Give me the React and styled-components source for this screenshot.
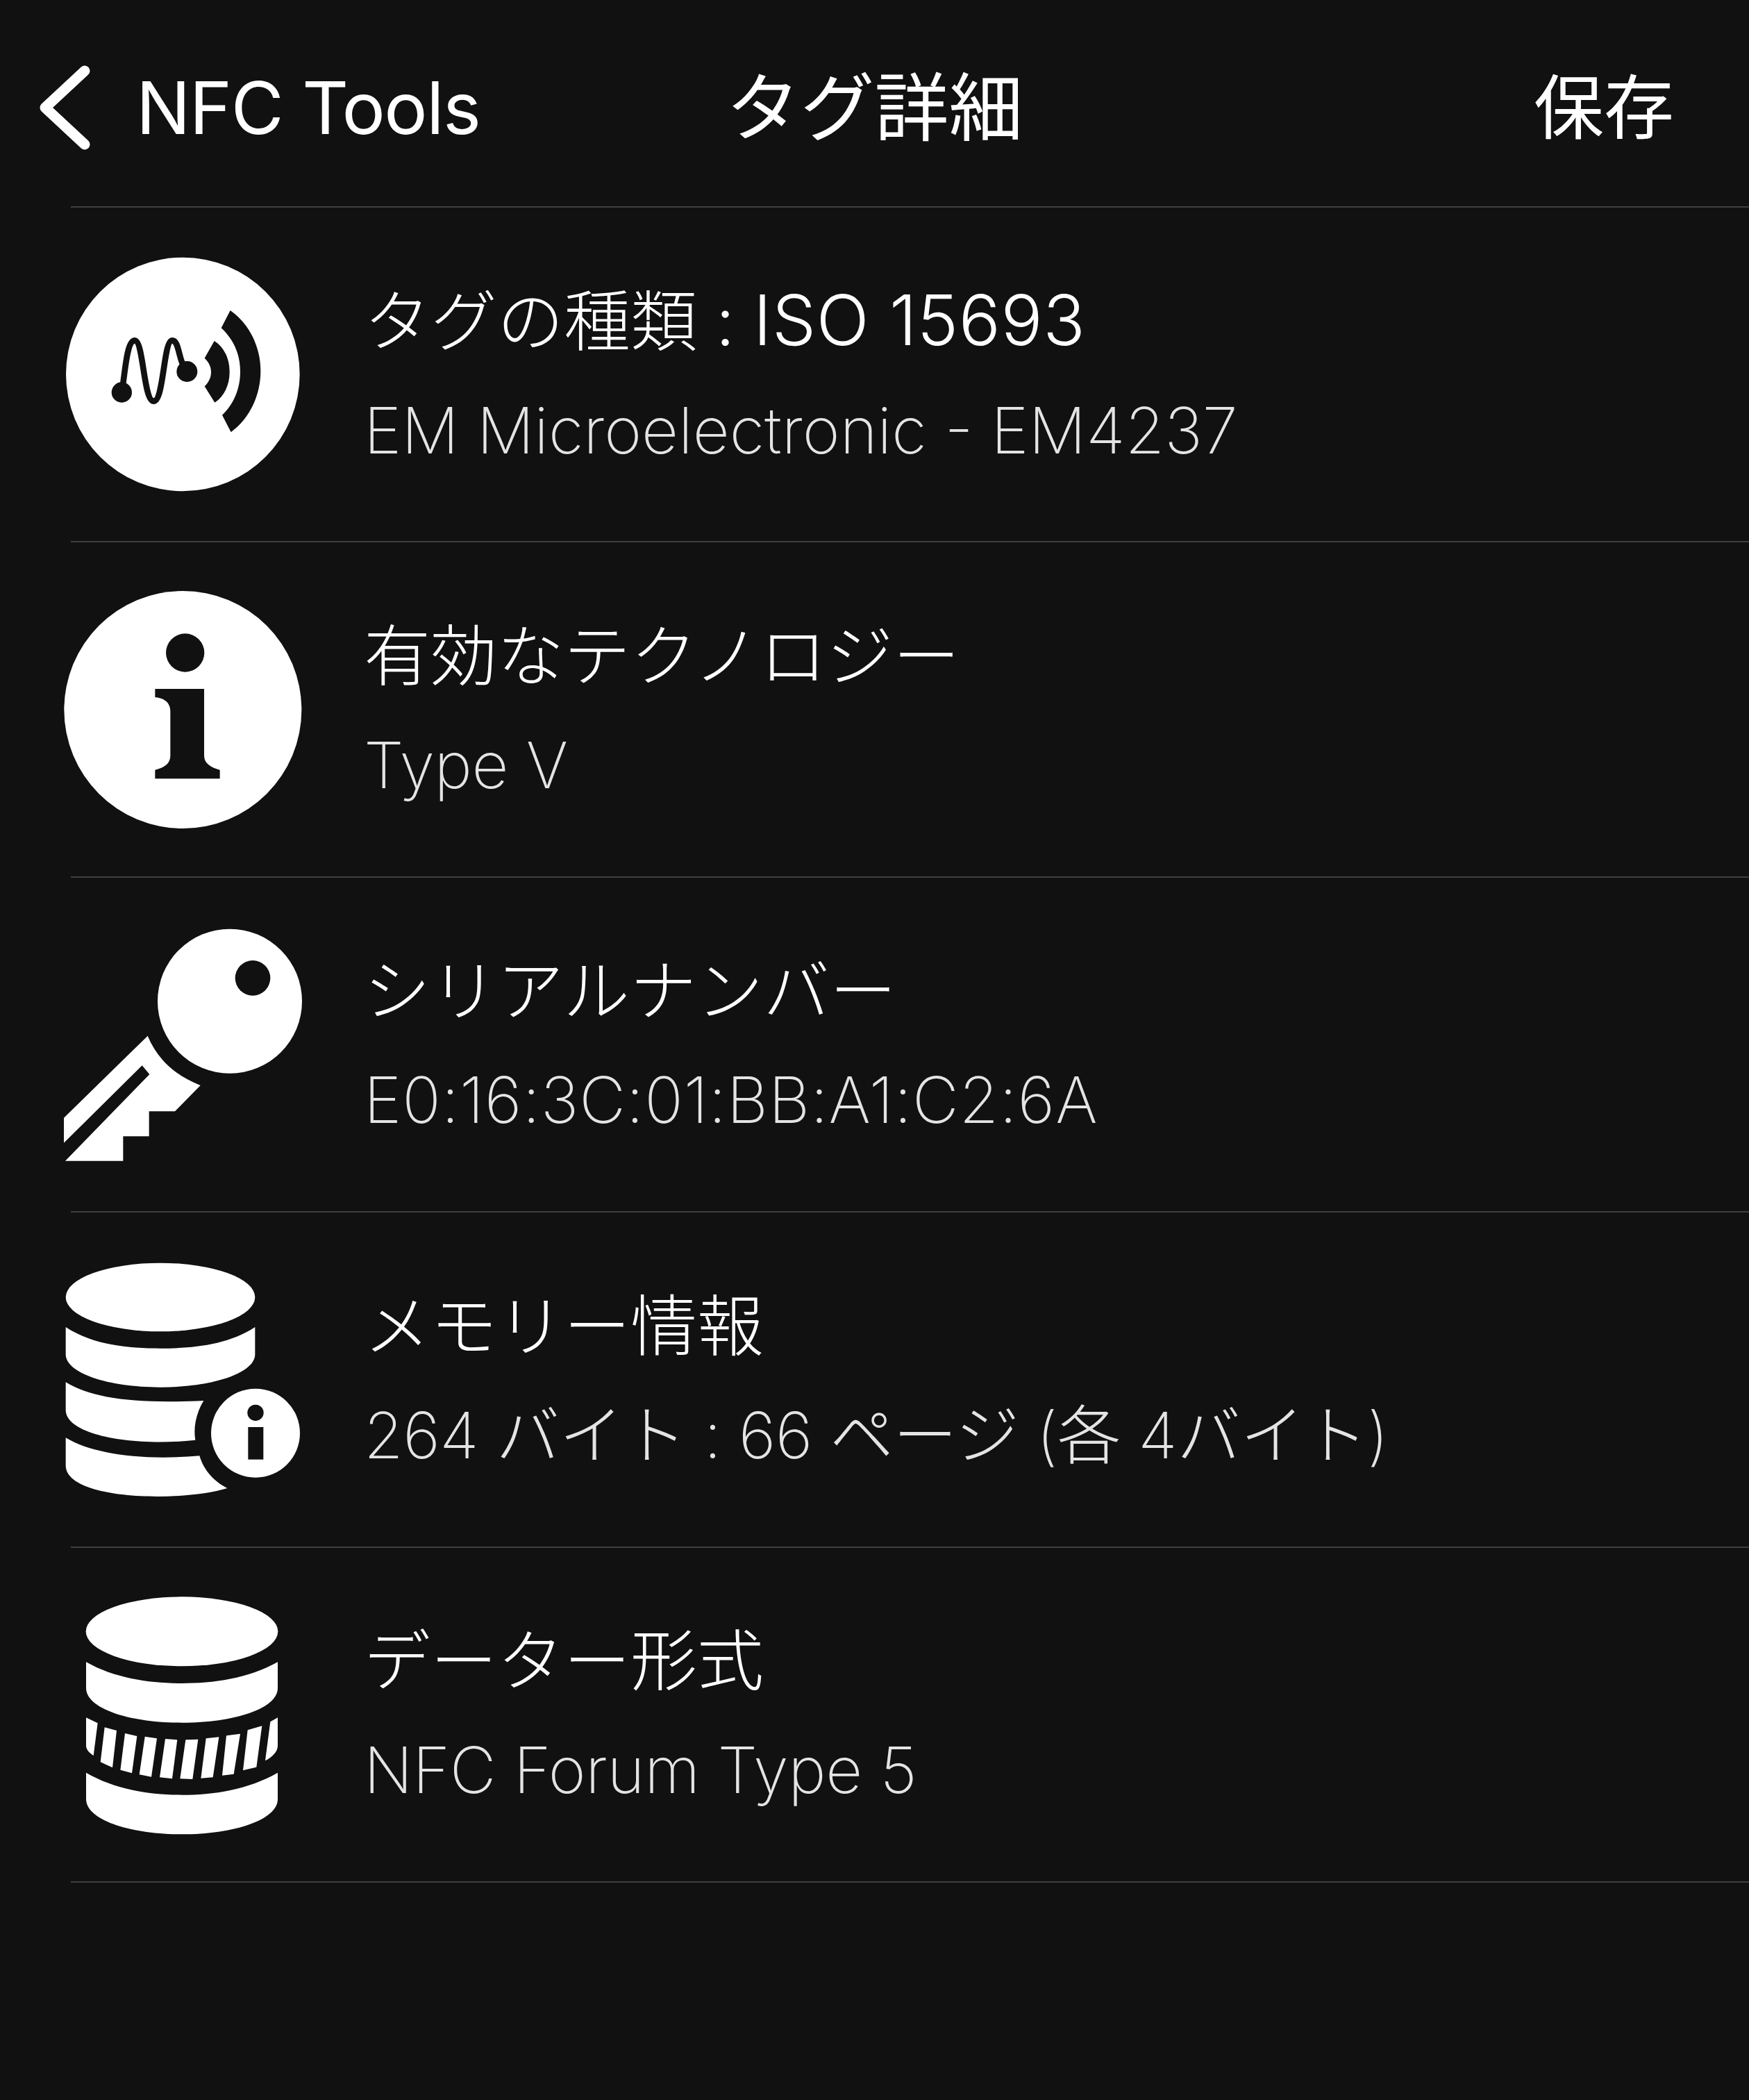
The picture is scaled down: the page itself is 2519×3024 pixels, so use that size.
import React from "react";
import styled, { createGlobalStyle } from "styled-components";

const Global = createGlobalStyle`
  html, body { margin: 0; padding: 0; background: #111112; }
  #root { width: 2519px; min-height: 3024px; }
`;
const LATIN = `Inter, "Noto Sans CJK JP", sans-serif`;
const Page = styled.div`
  width: 2519px; height: 3024px; background: #111112; color: #fff;
  font-family: ${LATIN}; overflow: hidden;
`;
const NavBar = styled.header`
  height: 297px; display: grid; grid-template-columns: 1fr auto 1fr; align-items: center;
  padding: 12px 56px 0; box-sizing: border-box;
`;
const BackLink = styled.div`
  display: flex; align-items: center; gap: 64px; font-size: 104px; font-weight: 400; line-height: 120px; letter-spacing: -1.5px;
`;
const NavTitle = styled.h1`
  margin: 0; font-size: 107px; font-weight: 400; line-height: 120px;
`;
const SaveAction = styled.div`
  justify-self: end; margin-right: 52px; font-size: 101px; font-weight: 400; line-height: 120px;
`;
const Divider = styled.div`
  height: 2px; margin-left: 102px; background: #3f3f40;
`;
const Row = styled.section`
  height: 480.4px; display: flex; align-items: center; gap: 64px; padding-left: 60px;
`;
const IconBox = styled.svg`
  width: 400px; height: 400px; flex: none; display: block;
`;
const TextColumn = styled.div`
  display: flex; flex-direction: column; gap: 30px; padding-top: 3px;
`;
const RowTitle = styled.div`
  font-size: 96px; font-weight: 300; line-height: 128px; white-space: nowrap;
`;
const LatinRun = styled.span`
  font-size: 100px; letter-spacing: 0.6px;
`;
const RowSub = styled.div`
  font-size: 92px; font-weight: 200; line-height: 128px; color: #e4e4e4; white-space: nowrap;
  letter-spacing: ${(p) => p.$tracking || 0}px;
`;

const Vb = ({ cy, children }) => (
  <IconBox viewBox={`0 ${cy - 600} 1200 1200`}>{children}</IconBox>
);
const W = "#fff";
const B = "#111112";

const NfcIcon = () => (
  <Vb cy={596}>
    <circle cx="610" cy="596" r="505" fill={W} />
    <path d="M346 672 C360 600 366 450 402 450 C440 450 440 712 484 712 C528 712 526 450 564 450 C596 450 590 540 626 584" fill="none" stroke={B} strokeWidth="26" strokeLinecap="round" />
    <circle cx="346" cy="674" r="44" fill={B} />
    <circle cx="628" cy="584" r="45" fill={B} />
    <path d="M746 452 C790 480 812 530 812 586 C812 640 790 690 748 718 L704 648 C722 630 732 610 732 586 C732 562 722 544 704 526 Z" fill={B} />
    <path d="M815 320 C900 380 946 480 946 582 C946 686 900 786 818 846 L780 772 C830 726 858 658 858 584 C858 510 830 446 776 396 Z" fill={B} />
  </Vb>
);
const InfoIcon = () => (
  <Vb cy={602}>
    <circle cx="610" cy="602" r="513" fill={W} />
    <circle cx="620" cy="356" r="83" fill={B} />
    <path d="M490 512 H702 V800 C702 830 725 850 770 862 V900 H490 V862 C530 852 556 836 556 800 V610 C556 570 530 552 490 548 Z" fill={B} />
  </Vb>
);
const KeyIcon = () => (
  <Vb cy={549}>
    <circle cx="813" cy="362" r="312" fill={W} />
    <circle cx="912" cy="262" r="76" fill={B} />
    <path d="M458 512 C500 610 570 680 686 726 L576 838 H464 V946 H352 V1052 H102 L466 678 L434 640 L96 974 V866 Z" fill={W} />
  </Vb>
);
const Disk = ({ x = 0, w = 820 }) => {
  const r = x + w;
  return (
    <>
      <ellipse cx={x + w / 2} cy="203" rx={w / 2} ry="148" fill={W} />
      <path d={`M${x} 332 C${x + 120} 410 ${x + 270} 424 ${x + w / 2} 424 C${r - 270} 424 ${r - 120} 410 ${r} 332 V450 C${r} 530 ${r - 180} 592 ${x + w / 2} 592 C${x + 180} 592 ${x} 530 ${x} 450 Z`} fill={W} />
    </>
  );
};
const DbInfoIcon = () => (
  <Vb cy={557}>
    <Disk x={104} w={818} />
    <path d="M104 570 C220 640 400 664 700 650 C670 700 654 760 664 820 C400 850 104 800 104 690 Z" fill={W} />
    <path d="M104 810 C220 880 430 910 682 888 C700 950 745 1000 802 1028 C600 1090 104 1080 104 930 Z" fill={W} />
    <circle cx="924" cy="790" r="192" fill={W} />
    <circle cx="924" cy="702" r="35" fill={B} />
    <rect x="892" y="764" width="66" height="140" fill={B} />
  </Vb>
);
const DbStripesIcon = () => {
  const bars = [
    "M192 578 L242 602 L224 742 C205 730 192 715 192 700 Z",
    "M272 620 L324 634 L306 794 L254 770 Z",
    "M360 646 L412 658 L390 818 L340 804 Z",
    "M446 660 L498 668 L474 834 L422 824 Z",
    "M534 670 L586 674 L564 842 L510 836 Z",
    "M622 674 L676 672 L652 844 L598 842 Z",
    "M710 668 L766 662 L740 836 L688 840 Z",
    "M798 656 L858 648 L830 822 L780 828 Z",
    "M890 632 L952 614 L928 792 L870 806 Z",
    "M988 596 L1020 578 V700 C1020 725 995 750 966 764 Z",
  ];
  return (
    <Vb cy={565}>
      <ellipse cx="606" cy="206" rx="415" ry="150" fill={W} />
      <path d="M192 338 C320 410 470 430 606 430 C742 430 890 410 1020 338 V450 C1020 540 830 600 606 600 C382 600 192 540 192 450 Z" fill={W} />
      {bars.map((d) => <path key={d} d={d} fill={W} />)}
      <path d="M192 816 C320 890 470 912 606 912 C742 912 890 890 1020 816 V930 C1020 1020 830 1082 606 1082 C382 1082 192 1020 192 930 Z" fill={W} />
    </Vb>
  );
};
const ChevronSvg = styled.svg`
  flex: none; display: block; width: 76px; height: 122px;
`;
const Chevron = () => (
  <ChevronSvg viewBox="0 0 76 122">
    <path d="M66 8 L9 61 L66 114" fill="none" stroke="#fff" strokeWidth="15" strokeLinecap="round" strokeLinejoin="round" />
  </ChevronSvg>
);

const items = [
  { Icon: NfcIcon, title: <>タグの種類 : <LatinRun>ISO 15693</LatinRun></>, key: "a", sub: "EM Microelectronic - EM4237" },
  { Icon: InfoIcon, title: "有効なテクノロジー", key: "b", sub: "Type V", tracking: -0.4 },
  { Icon: KeyIcon, title: "シリアルナンバー", key: "c", sub: "E0:16:3C:01:BB:A1:C2:6A", tracking: 0.9 },
  { Icon: DbInfoIcon, title: "メモリー情報", key: "d", sub: "264 バイト : 66 ページ (各 4バイト)", tracking: -0.6 },
  { Icon: DbStripesIcon, title: "データー形式", key: "e", sub: "NFC Forum Type 5", tracking: -0.3 },
];

export default function App() {
  return (
    <Page>
      <Global />
      <NavBar>
        <BackLink><Chevron />NFC Tools</BackLink>
        <NavTitle>タグ詳細</NavTitle>
        <SaveAction>保存</SaveAction>
      </NavBar>
      <Divider />
      {items.map(({ Icon, title, sub, key, tracking }) => (
        <React.Fragment key={key}>
          <Row>
            <Icon />
            <TextColumn>
              <RowTitle>{title}</RowTitle>
              <RowSub $tracking={tracking}>{sub}</RowSub>
            </TextColumn>
          </Row>
          <Divider />
        </React.Fragment>
      ))}
    </Page>
  );
}
